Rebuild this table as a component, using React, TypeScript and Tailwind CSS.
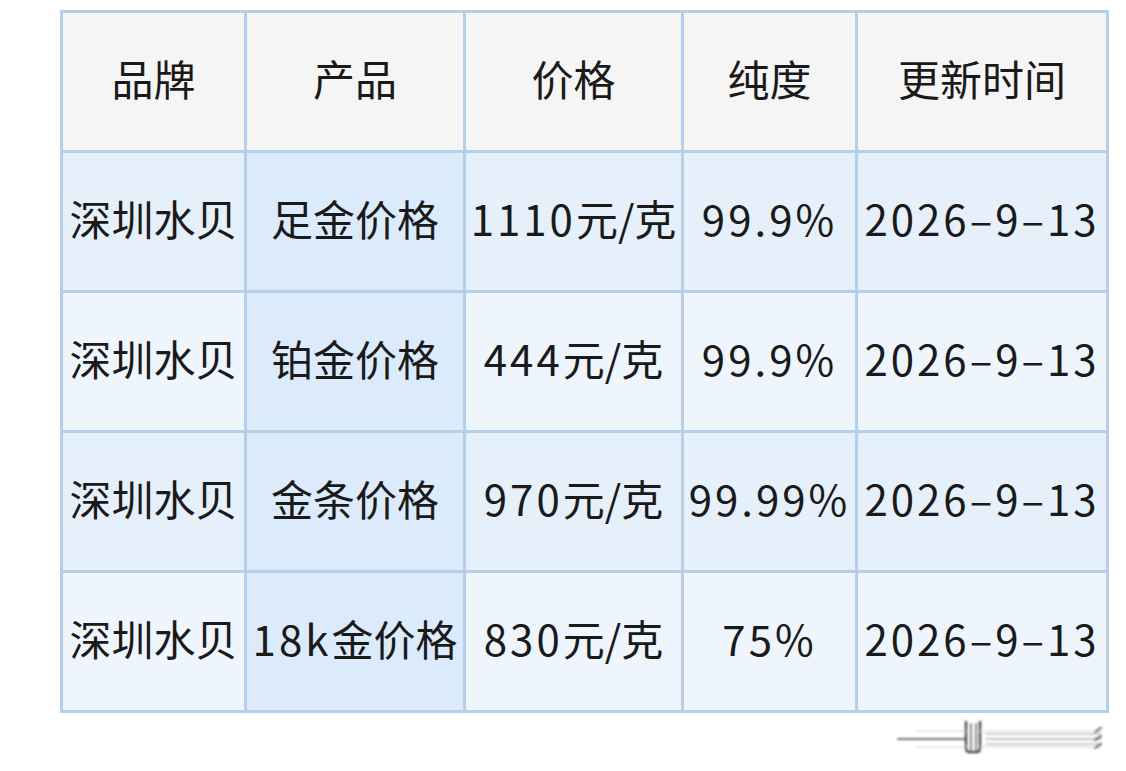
import React from "react";

const header = ["品牌", "产品", "价格", "纯度", "更新时间"];

const rows = [
  ["深圳水贝", "足金价格", "1110元/克", "99.9%", "2026-9-13"],
  ["深圳水贝", "铂金价格", "444元/克", "99.9%", "2026-9-13"],
  ["深圳水贝", "金条价格", "970元/克", "99.99%", "2026-9-13"],
  ["深圳水贝", "18k金价格", "830元/克", "75%", "2026-9-13"],
];

const widths = ["w-[184px]", "w-[219px]", "w-[218px]", "w-[174px]", "w-[251px]"];

// latin runs get a bit of tracking, CJK stays as is
function CellText({ text }: { text: string }) {
  const parts = text.replace(/-/g, "–").split(/([0-9a-zA-Z.%–]+)/).filter(Boolean);
  return (
    <>
      {parts.map((p, i) =>
        /[0-9a-zA-Z.%–]/.test(p) ? (
          <span key={i} className="tracking-[3px]">
            {p}
          </span>
        ) : (
          <span key={i}>{p}</span>
        )
      )}
    </>
  );
}

function ScrollMark() {
  return (
    <svg width="214" height="40" viewBox="0 0 214 40" className="opacity-80">
      <defs>
        <filter id="soft" x="-10%" y="-50%" width="120%" height="200%">
          <feGaussianBlur stdDeviation="0.9" />
        </filter>
      </defs>
      <g filter="url(#soft)" fill="none" strokeLinecap="round">
        <line x1="2" y1="21" x2="70" y2="21" stroke="#555" strokeWidth="2" />
        <line x1="20" y1="13" x2="205" y2="13" stroke="#e2e2e2" strokeWidth="2" />
        <line x1="20" y1="29" x2="205" y2="29" stroke="#e2e2e2" strokeWidth="2" />
        <line x1="90" y1="16" x2="205" y2="16" stroke="#aaa" strokeWidth="1.5" />
        <line x1="90" y1="21" x2="205" y2="21" stroke="#999" strokeWidth="1.5" />
        <line x1="90" y1="26" x2="205" y2="26" stroke="#aaa" strokeWidth="1.5" />
        <path d="M70 4 V30 Q70 34 74 34 H80 Q84 34 84 30 V4" stroke="#222" strokeWidth="2.5" />
        <line x1="75" y1="6" x2="75" y2="32" stroke="#666" strokeWidth="2" />
        <line x1="80" y1="6" x2="80" y2="32" stroke="#666" strokeWidth="2" />
        <path d="M199 14 L205 10" stroke="#111" strokeWidth="2" />
        <path d="M199 22 L205 18" stroke="#111" strokeWidth="2" />
        <path d="M199 30 L205 26" stroke="#111" strokeWidth="2" />
      </g>
    </svg>
  );
}

export default function App() {
  return (
    <div
      className="w-[1126px] h-[771px] bg-white overflow-hidden"
      style={{ fontFamily: '"Noto Sans CJK SC", "Noto Sans", sans-serif' }}
    >
      <div className="pt-[10px] pl-[60px]">
        <table className="border-collapse text-[#1a1a1a] text-[42px] leading-none">
          <thead>
            <tr className="h-[140px] bg-[#f5f5f5]">
              {header.map((h, i) => (
                <th
                  key={h}
                  className={`${widths[i]} border-[3px] border-[#b6cfe8] text-center font-normal pb-[8px]`}
                >
                  {h}
                </th>
              ))}
            </tr>
          </thead>
          <tbody>
            {rows.map((r, ri) => (
              <tr
                key={ri}
                className={`h-[140px] ${ri % 2 === 0 ? "bg-[#e6f0fa]" : "bg-[#eef5fd]"}`}
              >
                {r.map((c, ci) => (
                  <td
                    key={ci}
                    className={`border-[3px] border-[#b6cfe8] text-center whitespace-nowrap px-0 pb-[8px] ${
                      ci === 1 ? "bg-[#dcebfc]" : ""
                    }`}
                  >
                    <CellText text={c} />
                  </td>
                ))}
              </tr>
            ))}
          </tbody>
        </table>
        <div className="flex justify-end w-[1050px] mt-[5px]">
          <ScrollMark />
        </div>
      </div>
    </div>
  );
}
